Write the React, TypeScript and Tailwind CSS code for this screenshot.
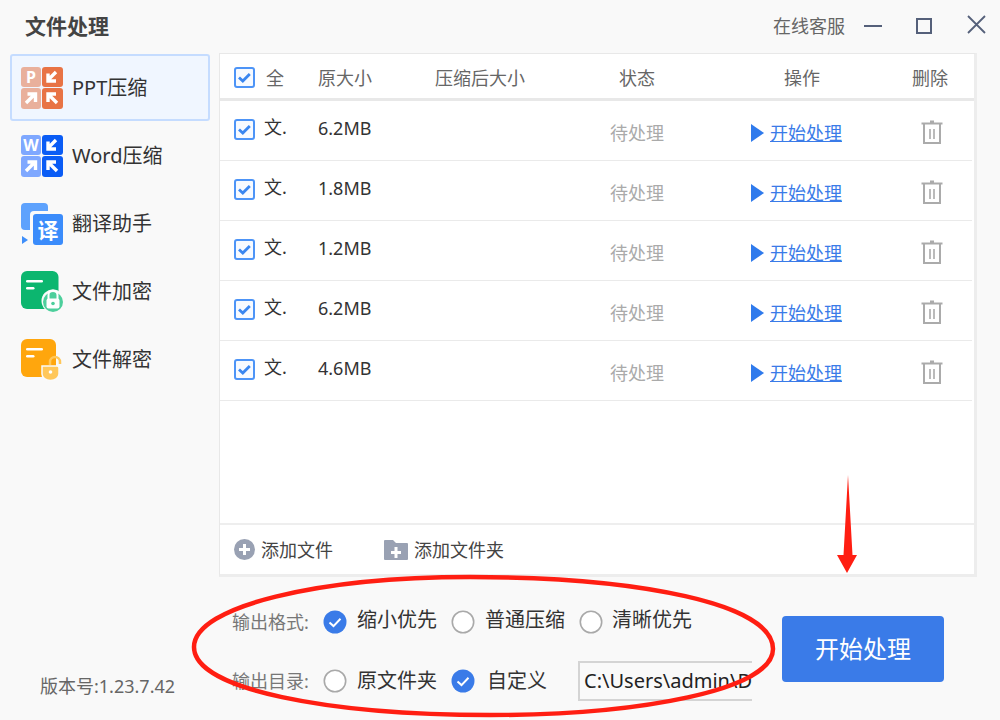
import React from "react";

const FONT = "font-['Noto_Sans','Noto_Sans_CJK_SC',sans-serif]";

function Check() {
  return (
    <svg width="21" height="21" viewBox="0 0 21 21" className="shrink-0">
      <rect x="1" y="1" width="19" height="19" rx="2" fill="#f7faff" stroke="#4d94f7" strokeWidth="2" />
      <path d="M5 10.5l3.8 3.6 7-7" fill="none" stroke="#3a86f0" strokeWidth="2.8" />
    </svg>
  );
}

function Radio({ on }: { on?: boolean }) {
  return (
    <svg width="24" height="24" viewBox="0 0 24 24" className="shrink-0">
      {on ? (
        <>
          <circle cx="12" cy="12" r="11.5" fill="#3a7be8" />
          <path d="M6.5 12.5l4 3.6 7-7.4" fill="none" stroke="#fff" strokeWidth="2" />
        </>
      ) : (
        <circle cx="12" cy="12" r="10.7" fill="#fff" stroke="#a9a9a9" strokeWidth="1.6" />
      )}
    </svg>
  );
}

function Trash() {
  return (
    <svg width="22" height="24" viewBox="0 0 22 24">
      <path d="M9 1.5h4M0.5 3.5h21" stroke="#ababab" strokeWidth="2" fill="none" />
      <path d="M3 4v19h16V4" stroke="#ababab" strokeWidth="2" fill="none" />
      <path d="M9 9v10M13 9v10" stroke="#ababab" strokeWidth="1.6" fill="none" />
    </svg>
  );
}

function CompressIcon({ light, dark, letter }: { light: string; dark: string; letter: string }) {
  const arrow = (x: number, y: number, d: string) => (
    <path transform={`translate(${x} ${y})`} d={d} fill="none" stroke="#fff" strokeWidth="3.4" />
  );
  return (
    <svg width="42" height="42" viewBox="0 0 42 42" className="shrink-0">
      <rect x="0" y="0" width="20" height="20" rx="3" fill={light} />
      <rect x="21" y="0" width="21" height="20" rx="3" fill={dark} />
      <rect x="0" y="21" width="20" height="21" rx="3" fill={light} />
      <rect x="21" y="21" width="21" height="21" rx="3" fill={dark} />
      <text x="10" y="16" textAnchor="middle" fontSize="16" fontWeight="700" fill="#fff" fontFamily="Noto Sans">
        {letter}
      </text>
      {arrow(21, 0, "M14 5L6.5 12.5M6 6.5v7.5h8")}
      {arrow(0, 21, "M5 15L13 7M6.5 6h8v8")}
      {arrow(21, 21, "M15 15L7 7M6 14V6h8")}
    </svg>
  );
}

function TranslateIcon() {
  return (
    <svg width="42" height="42" viewBox="0 0 42 42" className="shrink-0">
      <rect x="0" y="0" width="27" height="27" rx="4" fill="#5ea2fd" />
      <path d="M1 33l6 4-6 4z" fill="#3f8ffa" />
      <rect x="9" y="8" width="33" height="34" rx="4" fill="#fafafa" />
      <rect x="12" y="11" width="30" height="31" rx="3" fill="#3b8cfb" />
      <text x="27" y="35" textAnchor="middle" fontSize="21" fontWeight="700" fill="#fff" fontFamily="Noto Sans CJK SC">
        译
      </text>
    </svg>
  );
}

function LockIcon({ fill, bg, open }: { fill: string; bg: string; open?: boolean }) {
  return (
    <svg width="42" height="42" viewBox="0 0 42 42" className="shrink-0">
      <rect x="0" y="0" width={open ? 35 : 37.5} height="38" rx="6" fill={bg} />
      <rect x="5" y="9" width="17" height="2.6" rx="1.3" fill="#fff" />
      <rect x="5" y="16" width="8.5" height="2.6" rx="1.3" fill="#fff" />
      {open ? (
        <>
          <path d="M29 26v-3a5 5 0 0 1 10 0v2" fill="none" stroke={fill} strokeWidth="2.5" />
          <path d="M21 27h15a2 2 0 0 1 2 2v6a8.5 6.5 0 0 1-17 0z" fill={fill} stroke="#fafafa" strokeWidth="1.5" />
          <circle cx="29.5" cy="33" r="1.8" fill="#fff" />
        </>
      ) : (
        <>
          <circle cx="32" cy="30" r="11.5" fill="#fafafa" />
          <circle cx="32" cy="31" r="10" fill={fill} />
          <path d="M27.5 28v-4a4.5 4.5 0 0 1 9 0v4" fill="none" stroke="#fff" strokeWidth="2" />
          <rect x="25.5" y="27.5" width="13" height="10" rx="2" fill="#fff" />
          <circle cx="32" cy="32.5" r="1.8" fill={fill} />
        </>
      )}
    </svg>
  );
}

const navItems = [
  { label: "PPT压缩", icon: <CompressIcon light="#e9b09c" dark="#e87345" letter="P" />, active: true },
  { label: "Word压缩", icon: <CompressIcon light="#7fa8ff" dark="#0a5cf5" letter="W" /> },
  { label: "翻译助手", icon: <TranslateIcon /> },
  { label: "文件加密", icon: <LockIcon bg="#0cb66f" fill="#4dcf9c" /> },
  { label: "文件解密", icon: <LockIcon bg="#ffa60d" fill="#ffc75a" open /> },
];

const rows = ["6.2MB", "1.8MB", "1.2MB", "6.2MB", "4.6MB"];

export default function App() {
  return (
    <div className={`relative w-[1000px] h-[720px] overflow-hidden bg-[#f9f9f9] flex flex-col text-[#333] ${FONT}`}>
      <header className="h-[53px] shrink-0 flex items-center pl-[25px]">
        <h1 className="text-[21px] font-bold text-[#444]">文件处理</h1>
        <span className="ml-auto text-[18px] text-[#666]">在线客服</span>
        <svg width="18" height="4" viewBox="0 0 18 4" className="ml-[19px] -mt-[2px]">
          <path d="M0 2h18" stroke="#55607a" strokeWidth="2" />
        </svg>
        <svg width="16" height="16" viewBox="0 0 16 16" className="ml-[34px] -mt-[2px]">
          <rect x="1" y="1" width="14" height="14" fill="none" stroke="#55607a" strokeWidth="2" />
        </svg>
        <svg width="20" height="20" viewBox="0 0 20 20" className="ml-[34px] mr-[14px] -mt-[3px]">
          <path d="M2 1l17 17M19 1L2 18" stroke="#55607a" strokeWidth="1.8" />
        </svg>
      </header>

      <div className="flex-1 flex min-h-0">
        <aside className="w-[219px] shrink-0 flex flex-col pl-[10px] pr-[9px] pb-[20px]">
          {navItems.map((n) =>
            n.active ? (
              <div
                key={n.label}
                className="h-[67px] mt-px mb-px flex items-center gap-[9px] pl-[9px] bg-[#f0f6ff] border-2 border-[#c5dcff] rounded-[3px] text-[20px] text-[#333]"
              >
                {n.icon}
                <span>{n.label}</span>
              </div>
            ) : (
              <div key={n.label} className="h-[68px] flex items-center gap-[9px] pl-[11px] text-[20px] text-[#333]">
                {n.icon}
                <span>{n.label}</span>
              </div>
            )
          )}
          <div className="mt-auto pl-[30px] text-[18px] text-[#666]">版本号:1.23.7.42</div>
        </aside>

        <main className="w-[758px] flex flex-col">
          <section className="h-[524px] bg-white border-t border-l border-[#e8e8e8] border-r-[3px] border-b-[3px] border-r-[#ededed] border-b-[#ededed] flex flex-col">
            <div className="h-[47px] shrink-0 border-b-[3px] border-[#e8e8e8] flex items-center pl-[14px] text-[18px] text-[#666]">
              <div className="w-[32px] pt-[3px]"><Check /></div>
              <div className="w-[52px] pt-[4px]">全</div>
              <div className="w-[117px] pt-[4px]">原大小</div>
              <div className="w-[135px] pt-[4px]">压缩后大小</div>
              <div className="w-[134px] pt-[4px] text-center">状态</div>
              <div className="w-[196px] pt-[4px] text-center">操作</div>
              <div className="w-[60px] pt-[4px] text-center">删除</div>
            </div>
            {rows.map((size, i) => (
              <div key={i} className="h-[60px] shrink-0 mr-[2px] border-b-[1.5px] border-[#eaeaea] flex text-[18px]">
                <div className="w-[30px] ml-[14px] pt-[18px]"><Check /></div>
                <div className="w-[54px] pt-[13px] text-[#333]">文.</div>
                <div className="w-[252px] pt-[14px] text-[#333]">{size}</div>
                <div className="w-[134px] pt-[19px] text-center text-[#aaa]">待处理</div>
                <div className="w-[196px] pt-[19px] pl-[47px] flex items-start gap-[6px]">
                  <svg width="13" height="18" viewBox="0 0 13 18" className="mt-[4px]"><path d="M0 0l13 9-13 9z" fill="#2f7aec" /></svg>
                  <a className="underline text-[#3a7be8]">开始处理</a>
                </div>
                <div className="w-[60px] pt-[19px] pl-[21px]"><Trash /></div>
              </div>
            ))}
            <div className="mt-auto h-[51px] shrink-0 border-t-2 border-[#eeeeee] flex items-center pl-[14px] text-[18px] text-[#444]">
              <svg width="21" height="21" viewBox="0 0 21 21">
                <circle cx="10.5" cy="10.5" r="10.5" fill="#99a1b3" />
                <path d="M10.5 5v11M5 10.5h11" stroke="#fff" strokeWidth="3" />
              </svg>
              <span className="ml-[6px] mt-[1px]">添加文件</span>
              <svg width="24" height="20" viewBox="0 0 24 20" className="ml-[51px]">
                <path d="M0 1a1 1 0 0 1 1-1h8l3 3h11a1 1 0 0 1 1 1v15a1 1 0 0 1-1 1H1a1 1 0 0 1-1-1z" fill="#99a1b3" />
                <path d="M12 7v11M7 12.5h10" stroke="#fff" strokeWidth="3" />
              </svg>
              <span className="ml-[6px] mt-[1px]">添加文件夹</span>
            </div>
          </section>

          <div className="flex-1 flex pl-[13px]">
            <div className="w-[550px] flex flex-col pt-[31px] text-[20px] text-[#333]">
              <div className="h-[28px] flex items-center">
                <span className="w-[91px] text-[18px] text-[#777]">输出格式:</span>
                <Radio on />
                <span className="ml-[10px] w-[94px] -mt-[5px]">缩小优先</span>
                <Radio />
                <span className="ml-[10px] w-[94px] -mt-[5px]">普通压缩</span>
                <Radio />
                <span className="ml-[9px] -mt-[5px]">清晰优先</span>
              </div>
              <div className="mt-[30px] flex items-center">
                <span className="w-[91px] text-[18px] text-[#777]">输出目录:</span>
                <Radio />
                <span className="ml-[10px] w-[94px]">原文件夹</span>
                <Radio on />
                <span className="ml-[12px] w-[91px]">自定义</span>
                <div className="w-[174px] h-[40px] -my-[5px] overflow-hidden whitespace-nowrap flex items-center pl-[4px] border-l-2 border-t-2 border-b-2 border-[#d4d4d4] text-[20px] text-[#222]">
                  C:\Users\admin\D
                </div>
              </div>
            </div>
            <button className="w-[162px] h-[66px] mt-[39px] bg-[#3a7be8] rounded-[4px] text-white text-[24px]">
              开始处理
            </button>
          </div>
        </main>
      </div>

      <svg className="absolute inset-0 pointer-events-none" width="1000" height="720" viewBox="0 0 1000 720">
        <path
          d="M194 647C194 606 320 577 470 577C640 577 773 604 773 649C773 690 640 715 490 715C330 715 194 690 194 647Z"
          fill="none"
          stroke="#ff1e12"
          strokeWidth="4.5"
        />
        <path d="M848 475L852.5 555H857L847 573L837 555H843.5Z" fill="#ff1e12" />
      </svg>
    </div>
  );
}
